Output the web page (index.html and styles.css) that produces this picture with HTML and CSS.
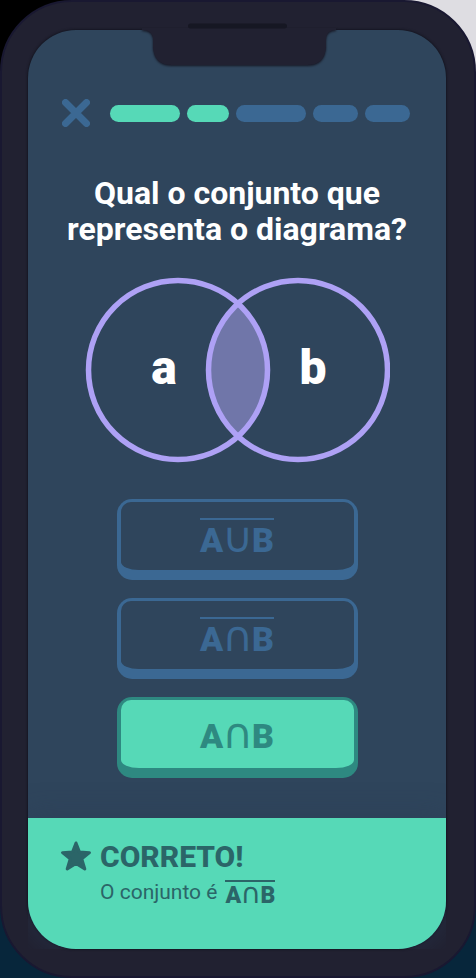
FILE: index.html
```html
<!DOCTYPE html>
<html lang="pt-BR">
<head>
<meta charset="utf-8">
<meta name="viewport" content="width=device-width, initial-scale=1">
<title>Quiz de conjuntos</title>
<link rel="stylesheet" href="styles.css">
</head>
<body>
<div class="phone">
  <main class="screen">
    <svg class="notch" viewBox="0 0 194 37" aria-hidden="true">
      <path class="notch-body" d="M0 -2V0Q11 0 11 10V17Q12 35 30 35H165Q183 35 184 17V10Q184 0 194 0V-2Z"/>
      <path class="speaker" d="M48.500 -4H142.500"/>
    </svg>
    <header class="top">
      <button class="close" type="button" aria-label="Fechar">
        <svg viewBox="0 0 28 28" aria-hidden="true"><path d="M3.500 3.500L24.500 24.500M24.500 3.500L3.500 24.500"/></svg>
      </button>
      <div class="steps">
        <span class="step long done"></span>
        <span class="step short done"></span>
        <span class="step long"></span>
        <span class="step"></span>
        <span class="step"></span>
      </div>
    </header>
    <h1 class="question">Qual o conjunto que<br>representa o diagrama?</h1>
    <svg class="venn" viewBox="0 0 306 186" role="img" aria-label="Diagrama de Venn com a interseção preenchida">
      <path class="overlap" d="M154 26.500A89.500 89.500 0 0 1 154 159.500A89.500 89.500 0 0 1 154 26.500Z"/>
      <circle cx="94" cy="93" r="89.500"/>
      <circle cx="214" cy="93" r="89.500"/>
      <text x="80" y="107">a</text>
      <text x="229" y="107">b</text>
    </svg>
    <div class="answers">
      <button class="answer" type="button"><span class="face"><span class="set barred"><b>A</b><i>∪</i><b>B</b></span></span></button>
      <button class="answer" type="button"><span class="face"><span class="set barred"><b>A</b><i>∩</i><b>B</b></span></span></button>
      <button class="answer right" type="button"><span class="face"><span class="set"><b>A</b><i>∩</i><b>B</b></span></span></button>
    </div>
    <section class="result">
      <svg class="star" viewBox="0 0 32 32" aria-hidden="true"><path d="M16 3L19.500 12L29.500 12.700L21.800 18.900L24.800 29L16 23.500L7.200 29L10.200 18.900L2.500 12.700L12.500 12Z"/></svg>
      <div class="message">
        <h2>CORRETO!</h2>
        <p>O conjunto é <span class="set barred small"><b>A</b><i>∩</i><b>B</b></span></p>
      </div>
    </section>
  </main>
</div>
</body>
</html>
```
FILE: styles.css
```css
* { box-sizing: border-box; }

body {
  margin: 0;
  min-height: 100vh;
  font-family: Roboto, sans-serif;
  background:
    linear-gradient(#000, #000) left top / 50% 50% no-repeat,
    linear-gradient(#dedde2, #dedde2) right top / 50% 50% no-repeat,
    #07263b;
}

.phone {
  display: flex;
  min-height: 100vh;
  padding: 28px 28px 27px 26px;
  border: 2px solid #191831;
  border-radius: 72px;
  background: #212131;
}

.screen {
  position: relative;
  display: flex;
  flex: 1;
  flex-direction: column;
  border-radius: 48px;
  background: #2f455c;
  box-shadow: 0 0 2px 1px #161723;
}

.notch {
  position: absolute;
  top: 0;
  left: 50%;
  width: 194px;
  height: 37px;
  margin-left: -95px;
  overflow: visible;
}
.notch-body { fill: #212131; filter: drop-shadow(0 1px 1px #161723); }
.speaker { stroke: #161723; stroke-width: 5; stroke-linecap: round; }

.top {
  display: flex;
  align-items: center;
  gap: 20px;
  padding: 69px 36px 0 34px;
}
.close {
  width: 28px;
  height: 28px;
  padding: 0;
  border: 0;
  background: none;
}
.close svg { display: block; }
.close path { stroke: #3b6893; stroke-width: 7; stroke-linecap: round; }

.steps { display: flex; flex: 1; gap: 7px; }
.step { flex: 45; height: 17px; border-radius: 9px; background: #3b6893; }
.long { flex: 70; }
.short { flex: 42; }
.done { background: #56d9b7; }

.question {
  margin: 48px 0 0;
  color: #fff;
  font-size: 32px;
  font-weight: 700;
  line-height: 36px;
  text-align: center;
}

.venn { width: 306px; height: 186px; margin: 30px auto 0; }
.venn circle { fill: none; stroke: #aea1f5; stroke-width: 5.500; }
.venn .overlap { fill: #7076a9; }
.venn text { fill: #fff; font-size: 48px; font-weight: 900; text-anchor: middle; }

.answers {
  display: flex;
  flex-direction: column;
  gap: 18px;
  width: 241px;
  margin: 36px auto 0;
}
.answer {
  display: flex;
  height: 81px;
  padding: 3px 4px 10px;
  border: 0;
  border-radius: 15px;
  background: #3b6893;
  color: #3b6893;
  font-family: inherit;
}
.face {
  display: flex;
  flex: 1;
  align-self: stretch;
  align-items: center;
  justify-content: center;
  border-radius: 10px 10px 18px 18px / 10px 10px 8px 8px;
  background: #2f455c;
}
.right { background: #2e8981; color: #2e8981; }
.right .face { background: #56d9b7; }

.set {
  display: inline-flex;
  align-items: baseline;
  justify-content: space-between;
  width: 74px;
  height: 36px;
  font-size: 34px;
  line-height: 36px;
}
.set b { font-weight: 900; }
.set i { font-family: "DejaVu Sans", sans-serif; font-size: 42px; font-style: normal; line-height: 36px; margin: 0 -6px; }
.barred { border-top: 2px solid; }

.result {
  display: flex;
  flex: 1;
  gap: 8px;
  margin-top: 40px;
  padding: 22px 32px 0;
  border-radius: 0 0 48px 48px;
  background: #56d9b7;
  color: #2b6568;
  box-shadow: 0 0 30px rgba(43, 60, 85, .6);
  clip-path: inset(-40px 0 0 0);
}
.star { width: 32px; height: 32px; }
.star path { fill: currentColor; stroke: currentColor; stroke-width: 3; stroke-linejoin: round; }
.result h2 { margin: 0; font-size: 30px; font-weight: 800; line-height: 34px; }
.result p { display: flex; align-items: center; gap: 8px; margin: 4px 0 0; font-size: 21px; line-height: 28px; }
.result .small { width: 50px; height: 24px; font-size: 23px; line-height: 24px; }
.small i { font-size: 28px; line-height: 24px; margin: 0 -4px; }
```
